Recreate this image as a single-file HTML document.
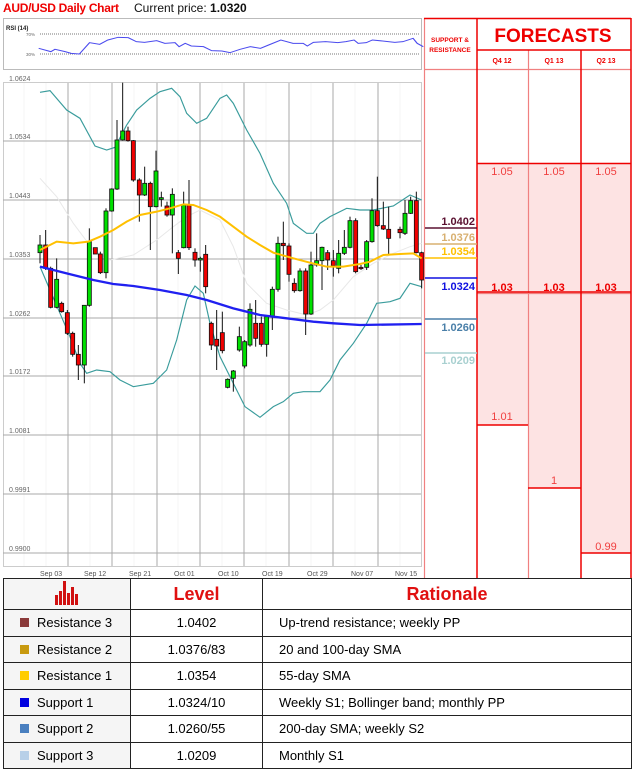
<!DOCTYPE html>
<html><head><meta charset="utf-8"><style>
body{margin:0;width:635px;height:775px;background:#fff;font-family:"Liberation Sans",sans-serif;overflow:hidden;position:relative}
.t{position:absolute;white-space:nowrap}
table{position:absolute;left:3px;top:578px;width:629px;border-collapse:collapse;font-size:13px}
td{border:1.5px solid #222;height:25.5px;padding:0}
</style></head><body>
<div class="t" style="left:3px;top:1px;font-size:12px;color:#e00;font-weight:bold;letter-spacing:-0.3px">AUD/USD Daily Chart</div>
<div class="t" style="left:134px;top:1px;font-size:12px;color:#111">Current price: <b>1.0320</b></div>

<svg width="635" height="578" style="position:absolute;left:0;top:0" font-family="Liberation Sans,sans-serif">
<rect x="3.5" y="18.5" width="418" height="51" fill="#fff" stroke="#bbb"/>
<text x="6" y="30" font-size="6" font-weight="bold" fill="#222">RSI (14)</text>
<line x1="40" y1="34" x2="420" y2="34" stroke="#777" stroke-dasharray="1,1"/>
<line x1="40" y1="54" x2="420" y2="54" stroke="#777" stroke-dasharray="1,1"/>
<text x="26" y="36" font-size="4.5" fill="#666">70%</text>
<text x="26" y="56" font-size="4.5" fill="#666">30%</text>
<g transform="scale(0.407,0.3333)"><polyline fill="none" stroke="#4a4aee" stroke-width="3" points="95,145 125,155 135,148 160,155 175,160 195,162 220,128 245,133 265,120 290,112 315,113 335,125 355,127 385,122 405,130 430,128 440,140 455,130 470,138 500,140 520,152 545,153 565,158 590,148 615,140 640,145 660,135 690,120 720,130 745,130 755,138 770,127 800,125 830,128 850,125 870,120 880,130 900,128 915,120 940,123 970,127 990,125 1015,115 1025,130 1040,140"/></g>

<rect x="3.5" y="82.5" width="418" height="484" fill="#fff" stroke="#ccc"/>
<g stroke="#f4f4f4"><line x1="24" y1="83" x2="24" y2="566"/><line x1="46" y1="83" x2="46" y2="566"/><line x1="90" y1="83" x2="90" y2="566"/><line x1="134" y1="83" x2="134" y2="566"/><line x1="178" y1="83" x2="178" y2="566"/><line x1="222" y1="83" x2="222" y2="566"/><line x1="266" y1="83" x2="266" y2="566"/><line x1="311" y1="83" x2="311" y2="566"/><line x1="355" y1="83" x2="355" y2="566"/><line x1="400" y1="83" x2="400" y2="566"/></g>
<g stroke="#aaa"><line x1="68" y1="83" x2="68" y2="566"/><line x1="112" y1="83" x2="112" y2="566"/><line x1="157" y1="83" x2="157" y2="566"/><line x1="200" y1="83" x2="200" y2="566"/><line x1="244" y1="83" x2="244" y2="566"/><line x1="289" y1="83" x2="289" y2="566"/><line x1="333" y1="83" x2="333" y2="566"/><line x1="378" y1="83" x2="378" y2="566"/>
<line x1="3" y1="141" x2="421" y2="141"/><line x1="3" y1="200" x2="421" y2="200"/><line x1="3" y1="259" x2="421" y2="259"/><line x1="3" y1="318" x2="421" y2="318"/><line x1="3" y1="376" x2="421" y2="376"/><line x1="3" y1="435" x2="421" y2="435"/><line x1="3" y1="494" x2="421" y2="494"/><line x1="3" y1="553" x2="421" y2="553"/></g>
<g font-size="7" fill="#666"><text x="9" y="81">1.0624</text><text x="9" y="139">1.0534</text><text x="9" y="198">1.0443</text><text x="9" y="257">1.0353</text><text x="9" y="316">1.0262</text><text x="9" y="374">1.0172</text><text x="9" y="433">1.0081</text><text x="9" y="492">0.9991</text><text x="9" y="551">0.9900</text></g>
<g font-size="7" fill="#555"><text x="40" y="576">Sep 03</text><text x="84" y="576">Sep 12</text><text x="129" y="576">Sep 21</text><text x="174" y="576">Oct 01</text><text x="218" y="576">Oct 10</text><text x="262" y="576">Oct 19</text><text x="307" y="576">Oct 29</text><text x="351" y="576">Nov 07</text><text x="395" y="576">Nov 15</text></g>

<g transform="translate(0,70) scale(0.33333)">
<polyline fill="none" stroke="#e8e8e8" stroke-width="3" points="120,325 170,380 220,460 280,540 330,570 400,555 470,510 520,470 560,440 600,420 660,450 700,530 740,640 800,700 860,720 920,735 960,720 1000,690 1060,620 1120,580 1180,550 1230,530 1265,520"/>
<polyline fill="none" stroke="#3a9c9c" stroke-width="3.5" points="120,67 150,62 200,120 240,145 285,228 320,240 345,232 380,165 410,120 450,85 480,65 515,55 540,80 560,130 590,160 620,145 660,85 680,75 700,100 740,180 780,250 820,340 860,400 880,460 920,490 940,490 960,460 990,440 1040,415 1080,420 1120,420 1180,408 1230,375 1265,390"/>
<polyline fill="none" stroke="#3a9c9c" stroke-width="3.5" points="120,590 150,660 180,730 210,800 240,880 260,910 290,900 330,905 360,930 400,950 460,940 500,900 530,810 560,690 585,648 610,670 630,760 660,860 700,940 735,1010 780,1042 820,1010 850,995 880,970 910,965 960,965 990,930 1020,870 1060,820 1100,760 1130,700 1170,695 1200,685 1230,640 1265,650"/>
<g stroke="#111" stroke-width="3">
<line x1="120" y1="495" x2="120" y2="580"/><line x1="137" y1="480" x2="137" y2="600"/><line x1="152" y1="590" x2="152" y2="715"/><line x1="170" y1="565" x2="170" y2="715"/><line x1="185" y1="695" x2="185" y2="728"/><line x1="202" y1="720" x2="202" y2="795"/><line x1="218" y1="785" x2="218" y2="860"/><line x1="235" y1="825" x2="235" y2="930"/><line x1="253" y1="880" x2="253" y2="940"/><line x1="268" y1="475" x2="268" y2="710"/><line x1="301" y1="545" x2="301" y2="612"/><line x1="318" y1="415" x2="318" y2="625"/><line x1="335" y1="355" x2="335" y2="425"/><line x1="351" y1="150" x2="351" y2="360"/><line x1="368" y1="38" x2="368" y2="212"/><line x1="384" y1="170" x2="384" y2="215"/><line x1="400" y1="210" x2="400" y2="335"/><line x1="418" y1="325" x2="418" y2="455"/><line x1="434" y1="290" x2="434" y2="378"/><line x1="451" y1="335" x2="451" y2="540"/><line x1="468" y1="242" x2="468" y2="412"/><line x1="484" y1="365" x2="484" y2="410"/><line x1="501" y1="395" x2="501" y2="440"/><line x1="517" y1="355" x2="517" y2="550"/><line x1="535" y1="540" x2="535" y2="612"/><line x1="551" y1="365" x2="551" y2="535"/><line x1="567" y1="330" x2="567" y2="540"/><line x1="585" y1="535" x2="585" y2="590"/><line x1="601" y1="560" x2="601" y2="605"/><line x1="617" y1="525" x2="617" y2="670"/><line x1="634" y1="755" x2="634" y2="840"/><line x1="650" y1="720" x2="650" y2="900"/><line x1="667" y1="725" x2="667" y2="850"/><line x1="683" y1="925" x2="683" y2="955"/><line x1="700" y1="900" x2="700" y2="965"/><line x1="718" y1="770" x2="718" y2="845"/><line x1="734" y1="810" x2="734" y2="895"/><line x1="750" y1="700" x2="750" y2="830"/><line x1="767" y1="690" x2="767" y2="830"/><line x1="784" y1="740" x2="784" y2="830"/><line x1="800" y1="735" x2="800" y2="860"/><line x1="817" y1="650" x2="817" y2="780"/><line x1="834" y1="500" x2="834" y2="665"/><line x1="850" y1="455" x2="850" y2="570"/><line x1="867" y1="520" x2="867" y2="635"/><line x1="883" y1="625" x2="883" y2="668"/><line x1="900" y1="595" x2="900" y2="665"/><line x1="917" y1="595" x2="917" y2="795"/><line x1="933" y1="545" x2="933" y2="735"/><line x1="950" y1="490" x2="950" y2="590"/><line x1="966" y1="530" x2="966" y2="660"/><line x1="983" y1="540" x2="983" y2="600"/><line x1="1000" y1="540" x2="1000" y2="620"/><line x1="1016" y1="510" x2="1016" y2="610"/><line x1="1033" y1="480" x2="1033" y2="555"/><line x1="1050" y1="440" x2="1050" y2="535"/><line x1="1067" y1="445" x2="1067" y2="610"/><line x1="1083" y1="585" x2="1083" y2="600"/><line x1="1100" y1="510" x2="1100" y2="600"/><line x1="1116" y1="385" x2="1116" y2="518"/><line x1="1132" y1="320" x2="1132" y2="470"/><line x1="1150" y1="395" x2="1150" y2="480"/><line x1="1166" y1="410" x2="1166" y2="555"/><line x1="1200" y1="470" x2="1200" y2="505"/><line x1="1215" y1="390" x2="1215" y2="495"/><line x1="1232" y1="380" x2="1232" y2="432"/><line x1="1249" y1="365" x2="1249" y2="550"/><line x1="1265" y1="545" x2="1265" y2="655"/>
</g>
<g stroke="#111" stroke-width="2.5" fill="#00e000">
<rect x="114" y="525" width="12" height="23"/><rect x="164" y="628" width="12" height="84"/><rect x="247" y="706" width="12" height="179"/><rect x="262" y="515" width="12" height="191"/><rect x="312" y="423" width="12" height="185"/><rect x="329" y="357" width="12" height="66"/><rect x="345" y="210" width="12" height="147"/><rect x="362" y="183" width="12" height="27"/><rect x="428" y="340" width="12" height="35"/><rect x="462" y="303" width="12" height="107"/><rect x="478" y="383" width="12" height="5"/><rect x="511" y="373" width="12" height="62"/><rect x="545" y="405" width="12" height="128"/><rect x="595" y="565" width="12" height="5"/><rect x="677" y="928" width="12" height="24"/><rect x="694" y="903" width="12" height="22"/><rect x="712" y="800" width="12" height="40"/><rect x="728" y="815" width="12" height="73"/><rect x="744" y="718" width="12" height="107"/><rect x="794" y="740" width="12" height="83"/><rect x="811" y="658" width="12" height="82"/><rect x="828" y="520" width="12" height="138"/><rect x="894" y="603" width="12" height="59"/><rect x="927" y="585" width="12" height="147"/><rect x="944" y="572" width="12" height="13"/><rect x="960" y="532" width="12" height="40"/><rect x="1010" y="550" width="12" height="45"/><rect x="1027" y="532" width="12" height="18"/><rect x="1044" y="452" width="12" height="80"/><rect x="1094" y="515" width="12" height="77"/><rect x="1110" y="422" width="12" height="93"/><rect x="1209" y="430" width="12" height="60"/><rect x="1226" y="392" width="12" height="38"/>
</g>
<g stroke="#111" stroke-width="2.5" fill="#f00000">
<rect x="131" y="525" width="12" height="70"/><rect x="146" y="595" width="12" height="117"/><rect x="179" y="700" width="12" height="25"/><rect x="196" y="728" width="12" height="62"/><rect x="212" y="790" width="12" height="63"/><rect x="229" y="853" width="12" height="32"/><rect x="280" y="533" width="12" height="19"/><rect x="295" y="552" width="12" height="56"/><rect x="378" y="183" width="12" height="29"/><rect x="394" y="212" width="12" height="118"/><rect x="412" y="330" width="12" height="45"/><rect x="445" y="340" width="12" height="70"/><rect x="495" y="408" width="12" height="27"/><rect x="529" y="548" width="12" height="17"/><rect x="561" y="405" width="12" height="128"/><rect x="579" y="547" width="12" height="23"/><rect x="611" y="553" width="12" height="97"/><rect x="628" y="760" width="12" height="65"/><rect x="644" y="808" width="12" height="20"/><rect x="661" y="788" width="12" height="54"/><rect x="761" y="760" width="12" height="45"/><rect x="778" y="760" width="12" height="63"/><rect x="844" y="520" width="12" height="7"/><rect x="861" y="528" width="12" height="85"/><rect x="877" y="640" width="12" height="22"/><rect x="911" y="603" width="12" height="129"/><rect x="977" y="548" width="12" height="22"/><rect x="994" y="572" width="12" height="15"/><rect x="1061" y="452" width="12" height="153"/><rect x="1077" y="592" width="12" height="4"/><rect x="1126" y="422" width="12" height="45"/><rect x="1144" y="467" width="12" height="10"/><rect x="1160" y="478" width="12" height="27"/><rect x="1194" y="478" width="12" height="10"/><rect x="1243" y="392" width="12" height="156"/><rect x="1259" y="548" width="12" height="82"/>
</g>
<polyline fill="none" stroke="#ffc000" stroke-width="6" points="120,540 170,515 220,520 265,515 300,500 340,480 380,455 420,435 470,425 510,415 550,403 580,405 620,420 660,440 700,470 740,500 780,525 820,548 880,565 930,578 980,590 1030,590 1080,582 1110,575 1150,555 1200,552 1240,550 1265,565"/>
<polyline fill="none" stroke="#2020f0" stroke-width="7" points="120,590 200,610 280,630 340,642 400,648 480,660 560,675 620,690 700,715 780,735 860,745 940,755 1000,760 1080,765 1265,762"/>
</g>

<rect x="477" y="163" width="154" height="130" fill="#fde3e3"/>
<rect x="477" y="293" width="51" height="132" fill="#fde3e3"/>
<rect x="528" y="293" width="53" height="195" fill="#fde3e3"/>
<rect x="581" y="293" width="50" height="260" fill="#fde3e3"/>
<g stroke="#f08080" stroke-width="1.2"><line x1="424.5" y1="18" x2="424.5" y2="578"/><line x1="424" y1="69.5" x2="477" y2="69.5"/><line x1="477" y1="69.5" x2="631" y2="69.5"/><line x1="528.5" y1="50" x2="528.5" y2="578"/><line x1="477" y1="293.5" x2="631" y2="293.5"/></g>
<g stroke="#e00" stroke-width="1.5"><line x1="424" y1="18.5" x2="631" y2="18.5"/><line x1="477" y1="18" x2="477" y2="578"/><line x1="581" y1="50" x2="581" y2="578"/><line x1="631" y1="18" x2="631" y2="578"/><line x1="477" y1="50" x2="631" y2="50"/><line x1="477" y1="163.5" x2="631" y2="163.5"/><line x1="477" y1="292" x2="631" y2="292"/><line x1="477" y1="425" x2="528" y2="425"/><line x1="528" y1="488" x2="581" y2="488"/><line x1="581" y1="553" x2="631" y2="553"/></g>
<text x="450" y="42" font-size="6.5" font-weight="bold" fill="#e00" text-anchor="middle">SUPPORT &amp;</text>
<text x="450" y="52" font-size="6.5" font-weight="bold" fill="#e00" text-anchor="middle">RESISTANCE</text>
<text x="553" y="42" font-size="19" font-weight="bold" fill="#e00" text-anchor="middle">FORECASTS</text>
<g font-size="7" font-weight="bold" fill="#e00" text-anchor="middle"><text x="502" y="63">Q4 12</text><text x="554" y="63">Q1 13</text><text x="606" y="63">Q2 13</text></g>
<g font-size="11" fill="#f04040" text-anchor="middle"><text x="502" y="175">1.05</text><text x="554" y="175">1.05</text><text x="606" y="175">1.05</text><text x="502" y="420">1.01</text><text x="554" y="484">1</text><text x="606" y="550">0.99</text></g>
<g font-size="11" font-weight="bold" fill="#e00" text-anchor="middle"><text x="502" y="291">1.03</text><text x="554" y="291">1.03</text><text x="606" y="291">1.03</text></g>
<line x1="425" y1="228" x2="477" y2="228" stroke="#5a1030" stroke-width="1.5"/>
<line x1="425" y1="244" x2="477" y2="244" stroke="#d8b070" stroke-width="1.5"/>
<line x1="425" y1="258" x2="477" y2="258" stroke="#ffc000" stroke-width="1.5"/>
<line x1="425" y1="278" x2="477" y2="278" stroke="#1010e0" stroke-width="1.5"/>
<line x1="425" y1="319" x2="477" y2="319" stroke="#4a7fa8" stroke-width="1.5"/>
<line x1="425" y1="353" x2="477" y2="353" stroke="#a8d0d0" stroke-width="1.5"/>
<g font-size="11" font-weight="bold" text-anchor="end"><text x="475" y="225" fill="#5a1030">1.0402</text><text x="475" y="241" fill="#d8b070">1.0376</text><text x="475" y="255" fill="#ffc000">1.0354</text><text x="475" y="290" fill="#1010e0">1.0324</text><text x="475" y="331" fill="#4a7fa8">1.0260</text><text x="475" y="364" fill="#a8d0d0">1.0209</text></g>
</svg>

<table>
<tr style="height:31px"><td style="width:126px;text-align:center;background:#f5f5f5"><svg width="26" height="24" viewBox="0 0 26 24"><g fill="#d01010"><rect x="1" y="14" width="3" height="10"/><rect x="5" y="10" width="3" height="14"/><rect x="9" y="0" width="3" height="24"/><rect x="13" y="12" width="3" height="12"/><rect x="17" y="6" width="3" height="18"/><rect x="21" y="13" width="3" height="11"/></g></svg></td><td style="width:131px;text-align:center;color:#e01010;font-weight:bold;font-size:18px">Level</td><td style="text-align:center;color:#e01010;font-weight:bold;font-size:18px">Rationale</td></tr>
<tr><td style="background:#f5f5f5;padding-left:16px"><span style="display:inline-block;width:9px;height:9px;background:#8b3a3a;margin-right:8px"></span>Resistance 3</td><td style="text-align:center">1.0402</td><td style="padding-left:16px">Up-trend resistance; weekly PP</td></tr>
<tr><td style="background:#f5f5f5;padding-left:16px"><span style="display:inline-block;width:9px;height:9px;background:#c89a10;margin-right:8px"></span>Resistance 2</td><td style="text-align:center">1.0376/83</td><td style="padding-left:16px">20 and 100-day SMA</td></tr>
<tr><td style="background:#f5f5f5;padding-left:16px"><span style="display:inline-block;width:9px;height:9px;background:#ffcc00;margin-right:8px"></span>Resistance 1</td><td style="text-align:center">1.0354</td><td style="padding-left:16px">55-day SMA</td></tr>
<tr><td style="background:#f5f5f5;padding-left:16px"><span style="display:inline-block;width:9px;height:9px;background:#0000e0;margin-right:8px"></span>Support 1</td><td style="text-align:center">1.0324/10</td><td style="padding-left:16px">Weekly S1; Bollinger band; monthly PP</td></tr>
<tr><td style="background:#f5f5f5;padding-left:16px"><span style="display:inline-block;width:9px;height:9px;background:#4a80c0;margin-right:8px"></span>Support 2</td><td style="text-align:center">1.0260/55</td><td style="padding-left:16px">200-day SMA; weekly S2</td></tr>
<tr><td style="background:#f5f5f5;padding-left:16px"><span style="display:inline-block;width:9px;height:9px;background:#b8d0e8;margin-right:8px"></span>Support 3</td><td style="text-align:center">1.0209</td><td style="padding-left:16px">Monthly S1</td></tr>
</table>
</body></html>
